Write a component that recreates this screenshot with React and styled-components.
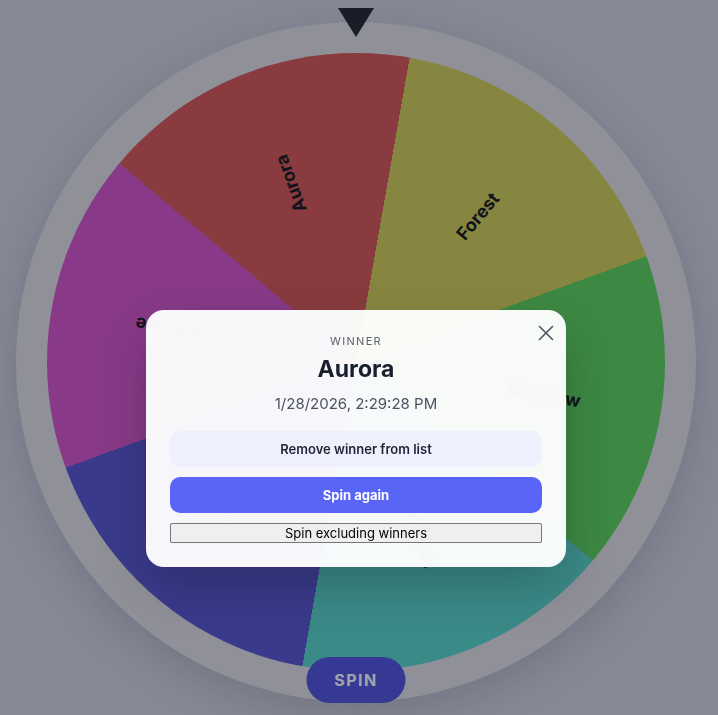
import React from 'react';
import styled, { createGlobalStyle } from 'styled-components';
import { X } from 'lucide-react';

const slices = [
  { name: 'Forest', color: '#d6cf51' },
  { name: 'Meadow', color: '#5ad356' },
  { name: 'Ocean', color: '#55d6c9' },
  { name: 'Indigo', color: '#5551cf' },
  { name: 'Sunrise', color: '#d751c9' },
  { name: 'Aurora', color: '#d9524f' },
];

const START = 10;
const STEP = 360 / slices.length;
const LABEL_RADIUS = 190;

const stops = slices
  .map((s, i) => `${s.color} ${i * STEP}deg ${(i + 1) * STEP}deg`)
  .join(', ');

const GlobalStyle = createGlobalStyle`
  html, body {
    margin: 0;
    padding: 0;
  }
  body {
    font-family: Inter, "Noto Sans", sans-serif;
    background: #d4d3dd;
  }
`;

const Page = styled.main`
  width: 718px;
  height: 715px;
  overflow: hidden;
  box-sizing: border-box;
  padding: 22px 0 0 16px;
`;

const Stage = styled.div`
  position: relative;
  width: 680px;
  height: 680px;
`;

const Rim = styled.div`
  width: 100%;
  height: 100%;
  box-sizing: border-box;
  padding: 31px;
  border-radius: 50%;
  background: #e4e0e5;
  box-shadow: 0 12px 40px rgba(30, 30, 60, 0.18);
`;

const Wheel = styled.div`
  position: relative;
  width: 100%;
  height: 100%;
  border-radius: 50%;
  overflow: hidden;
  background: conic-gradient(from ${START}deg, ${(p) => p.$stops});
`;

// one label per slice, pivoting on the hub, centred at LABEL_RADIUS and reading outward
const SliceLabel = styled.span`
  position: absolute;
  left: 50%;
  top: 50%;
  width: ${LABEL_RADIUS * 2}px;
  height: 24px;
  margin-top: -12px;
  text-align: center;
  white-space: nowrap;
  transform-origin: 0 50%;
  transform: rotate(${(p) => p.$angle}deg);
  font: 700 18px/24px Inter, sans-serif;
  color: #111;
`;

const Pointer = styled.div`
  position: absolute;
  top: -14px;
  left: 50%;
  margin-left: -18px;
  width: 0;
  height: 0;
  border-left: 18px solid transparent;
  border-right: 18px solid transparent;
  border-top: 29px solid #201f29;
`;

const SpinButton = styled.button`
  position: absolute;
  bottom: -1px;
  left: 50%;
  transform: translateX(-50%);
  width: 99px;
  height: 46px;
  border: 0;
  border-radius: 23px;
  background: #4f4fdd;
  color: #fff;
  font: 700 16px Inter, sans-serif;
  letter-spacing: 1.5px;
`;

const Backdrop = styled.div`
  position: fixed;
  inset: 0;
  display: flex;
  justify-content: center;
  align-items: flex-start;
  box-sizing: border-box;
  padding: 310px 6px 0 0;
  background: rgba(17, 24, 39, 0.4);
`;

const Modal = styled.section`
  position: relative;
  width: 420px;
  box-sizing: border-box;
  padding: 24px;
  border-radius: 18px;
  background: rgba(255, 255, 255, 0.96);
  backdrop-filter: blur(1px);
  box-shadow: 0 20px 50px rgba(0, 0, 0, 0.2);
  text-align: center;
`;

const CloseButton = styled.button`
  position: absolute;
  top: 10px;
  right: 7px;
  display: flex;
  padding: 0;
  border: 0;
  background: none;
  color: #4b5563;
`;

const Eyebrow = styled.div`
  font-size: 11px;
  line-height: 14px;
  letter-spacing: 0.12em;
  color: #5b6270;
`;

const WinnerName = styled.h2`
  margin: 7px 0 0;
  font-size: 23px;
  line-height: 28px;
  font-weight: 700;
  color: #1a1f2e;
`;

const Timestamp = styled.div`
  margin: 11px 0 17px;
  font-size: 15px;
  line-height: 20px;
  color: #4b5260;
`;

const ActionButton = styled.button`
  display: block;
  width: 100%;
  height: 36px;
  border: 0;
  border-radius: 10px;
  background: ${(p) => (p.$primary ? '#5865f7' : '#eef0fe')};
  color: ${(p) => (p.$primary ? '#fff' : '#1f2433')};
  font: ${(p) => (p.$primary ? 700 : 600)} 13px Inter, sans-serif;
  & + & {
    margin-top: 10px;
  }
`;

const PlainButton = styled.button`
  display: block;
  width: 100%;
  height: 20px;
  margin-top: 10px;
  padding: 0;
  border: 1px solid #767676;
  border-radius: 2px;
  background: #efefef;
  color: #000;
  font: 400 13px Inter, sans-serif;
`;

export default function App() {
  return (
    <>
      <GlobalStyle />
      <Page>
        <Stage>
          <Rim>
            <Wheel $stops={stops}>
              {slices.map((s, i) => (
                <SliceLabel key={s.name} $angle={START + i * STEP + STEP / 2 - 90}>
                  {s.name}
                </SliceLabel>
              ))}
            </Wheel>
          </Rim>
          <Pointer />
          <SpinButton>SPIN</SpinButton>
        </Stage>
      </Page>
      <Backdrop>
        <Modal>
          <CloseButton aria-label="Close">
            <X size={26} strokeWidth={1.5} />
          </CloseButton>
          <Eyebrow>WINNER</Eyebrow>
          <WinnerName>Aurora</WinnerName>
          <Timestamp>1/28/2026, 2:29:28 PM</Timestamp>
          <ActionButton>Remove winner from list</ActionButton>
          <ActionButton $primary>Spin again</ActionButton>
          <PlainButton>Spin excluding winners</PlainButton>
        </Modal>
      </Backdrop>
    </>
  );
}
